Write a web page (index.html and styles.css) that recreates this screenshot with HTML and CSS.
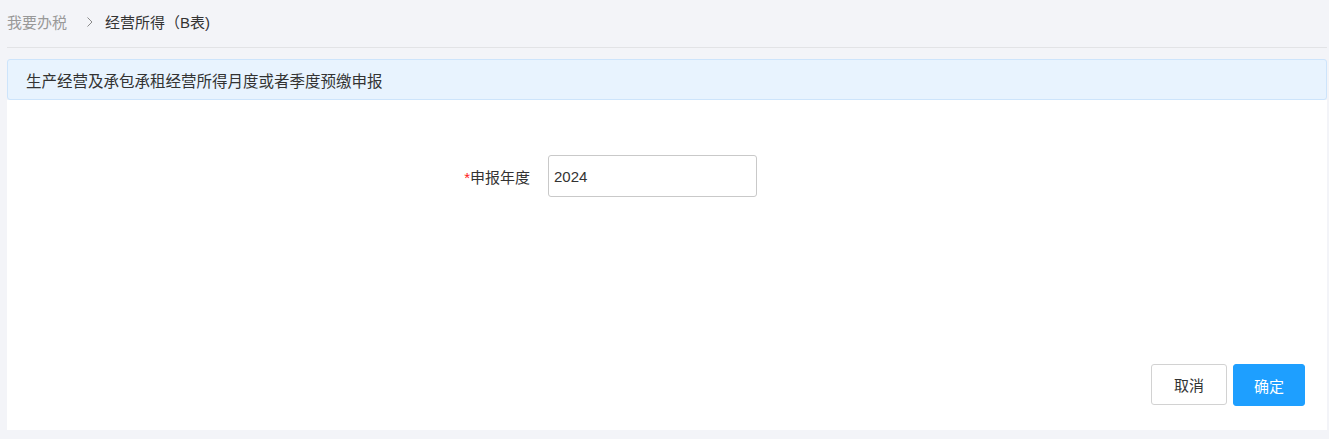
FILE: index.html
```html
<!DOCTYPE html>
<html lang="zh-CN">
<head>
<meta charset="utf-8">
<title>经营所得（B表)</title>
<link rel="stylesheet" href="styles.css">
</head>
<body>
<div class="page">
  <div class="breadcrumb">
    <span class="crumb-link">我要办税</span>
    <svg class="crumb-sep" width="8" height="12" viewBox="0 0 8 12"><path d="M1.5 1.5 L6 6 L1.5 10.5" fill="none" stroke="#8a8a8a" stroke-width="1"/></svg>
    <span class="crumb-current">经营所得（B表)</span>
  </div>
  <div class="alert">生产经营及承包承租经营所得月度或者季度预缴申报</div>
  <div class="card">
    <div class="form-row">
      <label class="form-label"><span class="req">*</span>申报年度</label>
      <input class="form-input" type="text" value="2024">
    </div>
    <div class="actions">
      <button class="btn btn-default">取消</button>
      <button class="btn btn-primary">确定</button>
    </div>
  </div>
</div>
</body>
</html>
```

FILE: styles.css
```css
html, body {
  margin: 0;
  padding: 0;
  height: 439px;
  overflow: hidden;
  background: #f3f4f8;
  font-family: "Liberation Sans", "Noto Sans CJK SC", sans-serif;
  font-size: 15px;
  color: #333;
}
.page {
  height: 439px;
  box-sizing: border-box;
  padding: 0 2px 9px 7px;
  display: flex;
  flex-direction: column;
}
.breadcrumb {
  height: 48px;
  box-sizing: border-box;
  border-bottom: 1px solid #e2e3e6;
  display: flex;
  align-items: center;
  padding-bottom: 4px;
}
.crumb-link {
  color: #999;
}
.crumb-sep {
  margin: 0 11px 0 19px;
}
.crumb-current {
  color: #333;
}
.alert {
  margin-top: 11px;
  height: 41px;
  box-sizing: border-box;
  border: 1px solid #cde4fb;
  border-radius: 3px;
  background: #e8f3fe;
  display: flex;
  align-items: center;
  padding-left: 18px;
  font-size: 15.5px;
  color: #333;
}
.card {
  flex: 1;
  background: #fff;
  display: flex;
  flex-direction: column;
  padding: 55px 22px 24px 0;
}
.form-row {
  display: flex;
  align-items: center;
  padding-left: 411px;
}
.form-label {
  width: 112px;
  text-align: right;
  padding-right: 18px;
  color: #333;
}
.req {
  color: #ff2020;
}
.form-input {
  width: 209px;
  height: 42px;
  box-sizing: border-box;
  border: 1px solid #c9c9c9;
  border-radius: 3px;
  padding: 0 5px;
  font-family: "Liberation Sans", "Noto Sans CJK SC", sans-serif;
  font-size: 15px;
  color: #333;
  outline: none;
}
.actions {
  margin-top: auto;
  display: flex;
  justify-content: flex-end;
  gap: 6px;
}
.btn {
  height: 41px;
  border-radius: 3px;
  font-family: "Liberation Sans", "Noto Sans CJK SC", sans-serif;
  font-size: 15px;
  padding: 0;
  cursor: pointer;
}
.btn-default {
  width: 76px;
  background: #fff;
  border: 1px solid #d2d2d2;
  color: #333;
}
.btn-primary {
  width: 72px;
  background: #1e9fff;
  border: 1px solid #1e9fff;
  color: #fff;
  height: 42px;
}
```
